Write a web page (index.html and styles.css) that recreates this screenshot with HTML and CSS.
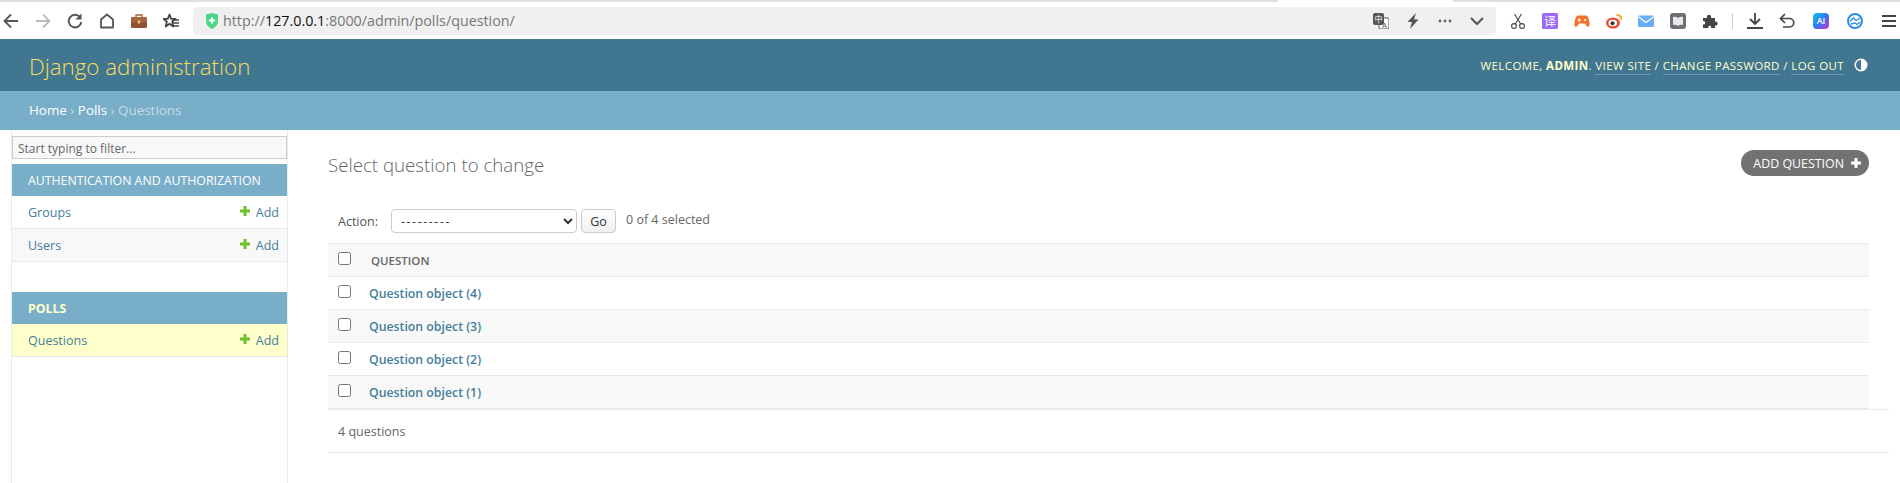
FILE: index.html
```html
<!DOCTYPE html>
<html lang="en">
  <head>
    <meta charset="UTF-8" />
    <title>Select question to change | Django site admin</title>
    <link rel="stylesheet" href="styles.css">
  </head>
  <body>
    <div class="tab-strip"><span class="strip-left"></span><span class="strip-right"></span></div>
    <div class="toolbar">
      <div class="nav-icons">
        <svg class="tb-icon" viewBox="0 0 16 16"><path d="M15 8H2M8 1.500 1.500 8 8 14.500" fill="none" stroke="#555" stroke-width="1.800"/></svg>
        <svg class="tb-icon" viewBox="0 0 16 16"><path d="M1 8h13M8 1.500 14.500 8 8 14.500" fill="none" stroke="#bbb" stroke-width="1.800"/></svg>
        <svg class="tb-icon" viewBox="0 0 16 16"><path d="M13 4.200A6.300 6.300 0 1 0 14.300 9" fill="none" stroke="#555" stroke-width="1.900"/><path d="M14.500 0.500v6h-6z" fill="#555"/></svg>
        <svg class="tb-icon" viewBox="0 0 16 16"><path d="M2 14.500V6.500L8 1.500l6 5v8z" fill="none" stroke="#555" stroke-width="1.800" stroke-linejoin="round"/></svg>
        <svg class="tb-icon" viewBox="0 0 16 16"><path d="M5 4V2h6v2" fill="none" stroke="#a5673f" stroke-width="1.400"/><rect y="4" width="16" height="11" rx="1.500" fill="#8f5232"/><rect y="4" width="16" height="5" rx="1.500" fill="#a5653f"/><rect x="6.800" y="7.500" width="2.400" height="3" fill="#ecc98a"/></svg>
        <svg class="tb-icon" viewBox="0 0 16 16"><path d="M6.500 1.500 8.200 5.800H12.500L9.200 8.700 10.300 13.500 6.500 10.800 2.700 13.500 3.800 8.700.5 5.800H4.800z" fill="none" stroke="#444" stroke-width="1.800" stroke-linejoin="round"/><path d="M9.500 7H16M10 10H16M10 13H16" stroke="#444" stroke-width="1.500"/></svg>
      </div>
      <div class="url-bar">
        <svg class="shield" viewBox="0 0 14 16"><path d="M1 1.500 7 0l6 1.500V8c0 4-3 6.500-6 8-3-1.500-6-4-6-8z" fill="#4cd787"/><path d="M7 4.500v6M4 7.500h6" stroke="#fff" stroke-width="2"/></svg>
        <span class="url">http://<b>127.0.0.1</b>:8000/admin/polls/question/</span>
        <div class="url-actions">
          <svg class="tb-icon" viewBox="0 0 16 16"><rect x="6" y="5" width="10" height="11" rx="1" fill="#fff" stroke="#555"/><rect width="11" height="12" rx="2" fill="#555"/><text x="5.500" y="9" class="icon-cjk" fill="#fff" font-size="8" text-anchor="middle">中</text><text x="11.500" y="14.500" class="icon-latin" fill="#555" font-size="7" text-anchor="middle">A</text></svg>
          <svg class="tb-icon" viewBox="0 0 16 16"><path d="M11 0 2.500 9H7l-2 7 8.500-9.500H9z" fill="#555"/></svg>
          <svg class="tb-icon" viewBox="0 0 16 16"><circle cx="3" cy="8" r="1.400" fill="#666"/><circle cx="8" cy="8" r="1.400" fill="#666"/><circle cx="13" cy="8" r="1.400" fill="#666"/></svg>
          <svg class="tb-icon" viewBox="0 0 16 16"><path d="M2 5l6 6 6-6" fill="none" stroke="#555" stroke-width="2"/></svg>
        </div>
      </div>
      <div class="ext-icons">
        <svg class="tb-icon" viewBox="0 0 16 16"><circle cx="4" cy="13" r="2.400" fill="none" stroke="#444" stroke-width="1.100"/><circle cx="12" cy="13" r="2.400" fill="none" stroke="#444" stroke-width="1.100"/><path d="M5.300 11 11.500 1M10.700 11 4.500 1" stroke="#444" stroke-width="1.100"/></svg>
        <svg class="tb-icon" viewBox="0 0 16 16"><rect width="16" height="16" rx="1.500" fill="#9a6bf6"/><text x="8" y="12.500" class="icon-cjk" fill="#fff" font-size="12" text-anchor="middle">译</text></svg>
        <svg class="tb-icon" viewBox="0 0 16 16"><path d="M4 2.500h8c2.500 0 4 7.500 3.500 10s-3.500 1-4.500-2H5c-1 3-4 4.500-4.500 2S1.500 2.500 4 2.500z" fill="#f5712c"/><path d="M3.500 7h3.500M5.200 5.300v3.400" stroke="#fff" stroke-width="1.200"/><circle cx="11" cy="7" r="1.100" fill="#fff"/></svg>
        <svg class="tb-icon" viewBox="0 0 16 16"><ellipse cx="7" cy="10" rx="7" ry="5.500" fill="#e9503a"/><ellipse cx="6.800" cy="10" rx="4.300" ry="3.300" fill="#fff"/><circle cx="6.500" cy="10.200" r="2" fill="#333"/><path d="M10.500 2c3 0 5 2 5 5" fill="none" stroke="#f5a623" stroke-width="1.800"/></svg>
        <svg class="tb-icon" viewBox="0 0 16 16"><rect y="2.500" width="16" height="11.500" rx="1" fill="#66aef5"/><path d="M0 3.500l8 6 8-6" fill="none" stroke="#fff" stroke-width="1.300"/></svg>
        <svg class="tb-icon" viewBox="0 0 16 16"><rect width="16" height="16" rx="3" fill="#6e6e76"/><path d="M3 4c2-.5 3.500 0 5 1 1.500-1 3-1.500 5-1v8c-2-.5-3.500 0-5 1-1.500-1-3-1.500-5-1z" fill="#e9e9ec"/></svg>
        <svg class="tb-icon" viewBox="0 0 16 16"><path d="M1 5h4c-1-4.500 5-4.500 4 0h4v3.500c3.500-1 3.500 5 0 4V15H9c1-3-3.500-3-2.500 0H1v-3.500c3 1 3-4.500 0-3.500z" fill="#444"/></svg>
        <span class="tb-sep"></span>
        <svg class="tb-icon" viewBox="0 0 16 16"><path d="M8 0v10.500M3 6l5 5 5-5M0 15h16" fill="none" stroke="#444" stroke-width="1.800"/></svg>
        <svg class="tb-icon" viewBox="0 0 16 16"><path d="M6 1 1.500 5.500 6 10" fill="none" stroke="#444" stroke-width="1.700"/><path d="M2 5.500h8.500a4 4 0 0 1 0 8.500H4" fill="none" stroke="#444" stroke-width="1.700"/></svg>
        <span class="ai-badge">AI</span>
        <svg class="tb-icon" viewBox="0 0 16 16"><circle cx="8" cy="8" r="7" fill="#fff" stroke="#2a8fe8" stroke-width="2"/><path d="M3 8.500l3.500-3.500 2.500 2.500 4-2.500M4 11l4-1 2 1.500 3-2.500" fill="none" stroke="#2a8fe8" stroke-width="1.300"/></svg>
        <svg class="tb-icon menu-icon" viewBox="0 0 16 16"><path d="M1 3h14M1 8h14M1 13h14" stroke="#444" stroke-width="1.900"/></svg>
      </div>
    </div>

    <header class="site-header">
      <h1 class="branding"><a href="#">Django administration</a></h1>
      <div class="user-tools">
        <span>WELCOME, <strong>ADMIN</strong>. <a href="#">VIEW SITE</a> / <a href="#">CHANGE PASSWORD</a> / <a href="#">LOG OUT</a></span>
        <svg class="theme-toggle" viewBox="0 0 14 14"><circle cx="7" cy="7" r="6.500" fill="#fff"/><path d="M7 2a5 5 0 0 0 0 10z" fill="#417690"/></svg>
      </div>
    </header>
    <div class="breadcrumbs">
      <a href="#">Home</a> › <a href="#">Polls</a> › Questions
    </div>

    <div class="main">
      <nav class="sidebar">
        <input class="nav-filter" type="text" placeholder="Start typing to filter...">
        <table class="app-module">
          <caption>AUTHENTICATION AND AUTHORIZATION</caption>
          <tr>
            <th><a href="#">Groups</a></th>
            <td><a class="add-link" href="#"><svg class="plus" viewBox="0 0 10 10"><path d="M5 0v10M0 5h10" stroke="#70bf2b" stroke-width="3"/></svg>Add</a></td>
          </tr>
          <tr class="alt">
            <th><a href="#">Users</a></th>
            <td><a class="add-link" href="#"><svg class="plus" viewBox="0 0 10 10"><path d="M5 0v10M0 5h10" stroke="#70bf2b" stroke-width="3"/></svg>Add</a></td>
          </tr>
        </table>
        <table class="app-module current-app">
          <caption>POLLS</caption>
          <tr class="current-model">
            <th><a href="#">Questions</a></th>
            <td><a class="add-link" href="#"><svg class="plus" viewBox="0 0 10 10"><path d="M5 0v10M0 5h10" stroke="#70bf2b" stroke-width="3"/></svg>Add</a></td>
          </tr>
        </table>
      </nav>

      <div class="content">
        <div class="title-row">
          <h2>Select question to change</h2>
          <a class="add-button" href="#">ADD QUESTION <svg class="plus-white" viewBox="0 0 10 10"><path d="M5 0v10M0 5h10" stroke="#fff" stroke-width="3"/></svg></a>
        </div>
        <div class="actions">
          <label>Action:</label>
          <select class="action-select"><option>---------</option></select>
          <button class="go-button">Go</button>
          <span class="action-counter">0 of 4 selected</span>
        </div>
        <div class="result-list">
          <div class="result-row head"><input type="checkbox"><span class="col-title">QUESTION</span></div>
          <div class="result-row"><input type="checkbox"><a href="#">Question object (4)</a></div>
          <div class="result-row alt"><input type="checkbox"><a href="#">Question object (3)</a></div>
          <div class="result-row"><input type="checkbox"><a href="#">Question object (2)</a></div>
          <div class="result-row alt"><input type="checkbox"><a href="#">Question object (1)</a></div>
        </div>
        <p class="paginator">4 questions</p>
      </div>
    </div>
  </body>
</html>
```

FILE: styles.css
```css
* {
  box-sizing: border-box;
}
html,
body {
  height: 100%;
}
body {
  margin: 0;
  overflow: hidden;
  background: #fff;
  color: #333;
  font-family: "Open Sans", "Liberation Sans", sans-serif;
  font-size: 12px;
}
a {
  color: #447e9b;
  text-decoration: none;
}

/* browser chrome */
.tab-strip {
  display: flex;
  justify-content: space-between;
  height: 2px;
}
.strip-left {
  width: 1278px;
  background: #e0e0e0;
}
.strip-right {
  width: 447px;
  background: #e0e0e0;
}
.toolbar {
  display: flex;
  align-items: center;
  height: 37px;
  background: #fff;
}
.nav-icons {
  display: flex;
  align-items: center;
  gap: 16px;
  width: 193px;
  padding-left: 3px;
}
.tb-icon {
  flex: none;
  width: 16px;
  height: 16px;
}
.icon-cjk {
  font-family: "Noto Sans CJK SC", sans-serif;
}
.icon-latin {
  font-family: "Liberation Sans", sans-serif;
}
.url-bar {
  display: flex;
  align-items: center;
  width: 1303px;
  height: 28px;
  padding-left: 12px;
  background: #f0f0f0;
  border-radius: 4px;
}
.shield {
  width: 14px;
  height: 16px;
  margin-right: 4px;
}
.url {
  color: #777;
  font-size: 14.3px;
}
.url b {
  color: #111;
  font-weight: 400;
}
.url-actions {
  display: flex;
  align-items: center;
  gap: 16px;
  margin-left: auto;
  padding-right: 11px;
}
.ext-icons {
  display: flex;
  align-items: center;
  gap: 16px;
  padding-left: 14px;
}
.tb-sep {
  width: 1px;
  height: 16px;
  margin: 0 -2px;
  background: #ccc;
}
.ai-badge {
  flex: none;
  width: 16px;
  height: 16px;
  margin: 0 2px;
  background: linear-gradient(135deg, #17c6e8, #2a7bf0 50%, #d32bd6);
  border-radius: 4px;
  color: #fff;
  font-size: 9px;
  font-weight: 600;
  line-height: 16px;
  text-align: center;
}
.menu-icon {
  margin-left: 2px;
}

/* admin header */
.site-header {
  display: flex;
  align-items: center;
  justify-content: space-between;
  height: 52px;
  padding: 0 32px 0 29px;
  background: #417690;
  color: #ffc;
}
.branding {
  margin: 2px 0 0;
  font-size: 22.3px;
  font-weight: 300;
}
.branding a {
  color: #f5dd5d;
}
.user-tools {
  display: flex;
  align-items: center;
  gap: 10px;
  font-size: 11.5px;
  letter-spacing: 0.4px;
}
.user-tools strong {
  font-weight: 700;
}
.user-tools a {
  color: #ffc;
  padding-bottom: 1px;
  border-bottom: 1px solid rgba(255, 255, 255, 0.25);
}
.theme-toggle {
  width: 14px;
  height: 14px;
}
.breadcrumbs {
  height: 39px;
  padding: 0 29px;
  background: #79aec8;
  color: #c4dce8;
  font-size: 13.4px;
  line-height: 39px;
}
.breadcrumbs a {
  color: #fff;
}

/* sidebar */
.main {
  display: flex;
}
.sidebar {
  flex: none;
  width: 277px;
  height: 353px;
  margin-left: 11px;
  padding-top: 6px;
  border-left: 1px solid #eaeaea;
  border-right: 1px solid #eaeaea;
}
.nav-filter {
  display: block;
  width: 100%;
  height: 23px;
  margin-bottom: 5px;
  padding: 1px 5px 0;
  background: #f8f8f8;
  border: 1px solid #ccc;
  font-family: inherit;
  font-size: 12px;
}
.nav-filter::placeholder {
  color: #666;
}
.app-module {
  width: 100%;
  margin-bottom: 30px;
  border-collapse: separate;
  border-spacing: 0;
}
.app-module caption {
  height: 32px;
  padding: 1px 16px 0;
  background: #79aec8;
  color: #fff;
  font-size: 12.3px;
  line-height: 31px;
  text-align: left;
  white-space: nowrap;
}
.current-app caption {
  color: #ffc;
  font-weight: 700;
}
.app-module th,
.app-module td {
  height: 33px;
  border-bottom: 1px solid #eaeaea;
  font-size: 12.5px;
}
.app-module th {
  padding: 0 16px;
  font-weight: 400;
  text-align: left;
}
.app-module td {
  padding: 0 8px;
  text-align: right;
}
.app-module tr.alt {
  background: #f8f8f8;
}
.app-module .current-model {
  background: #ffc;
}
.add-link {
  display: inline-flex;
  align-items: center;
  gap: 6px;
}
.plus {
  width: 10px;
  height: 10px;
  margin-top: -3px;
}

/* changelist */
.content {
  flex: 1;
  min-width: 0;
  padding: 21px 11px 0 40px;
}
.title-row {
  display: flex;
  align-items: flex-start;
  justify-content: space-between;
  height: 58px;
  margin-right: 20px;
}
.title-row h2 {
  margin: 0;
  color: #666;
  font-size: 18.7px;
  font-weight: 300;
  line-height: 28px;
}
.add-button {
  display: flex;
  align-items: center;
  gap: 7px;
  height: 26px;
  margin-top: -1px;
  padding: 0 8px 0 12px;
  background: #727272;
  border-radius: 13px;
  color: #fff;
  font-size: 12.4px;
}
.plus-white {
  width: 10px;
  height: 10px;
}
.actions {
  display: flex;
  align-items: center;
  height: 24px;
  margin-bottom: 10px;
  padding-left: 10px;
  font-size: 12.5px;
}
.actions label {
  width: 53px;
  color: #555;
}
.action-select {
  width: 186px;
  height: 24px;
  margin-right: 4px;
  padding-left: 5px;
  background: #fff;
  border: 1px solid #ccc;
  border-radius: 4px;
  color: #333;
  font-family: inherit;
  font-size: 12px;
  letter-spacing: 1.7px;
}
.go-button {
  width: 35px;
  height: 24px;
  margin-right: 10px;
  padding: 0;
  background: linear-gradient(#fff, #f0f0f0);
  border: 1px solid #ccc;
  border-radius: 4px;
  color: #333;
  font-family: inherit;
  font-size: 12.5px;
}
.action-counter {
  margin-top: -4px;
  color: #666;
}
.result-list {
  margin-right: 20px;
  border-top: 1px solid #eaeaea;
}
.result-row {
  display: flex;
  align-items: center;
  height: 33px;
  padding-left: 10px;
  border-bottom: 1px solid #eaeaea;
  font-size: 12.3px;
  font-weight: 600;
}
.result-row.head,
.result-row.alt {
  background: #f8f8f8;
}
.result-row input {
  width: 13px;
  height: 13px;
  margin: -3px 18px 0 0;
}
.col-title {
  margin-left: 2px;
  color: #666;
  font-size: 11.5px;
}
.paginator {
  height: 44px;
  margin: 0;
  padding-left: 10px;
  border-top: 1px solid #eaeaea;
  border-bottom: 1px solid #eaeaea;
  color: #666;
  font-size: 12.5px;
  line-height: 44px;
}
```
